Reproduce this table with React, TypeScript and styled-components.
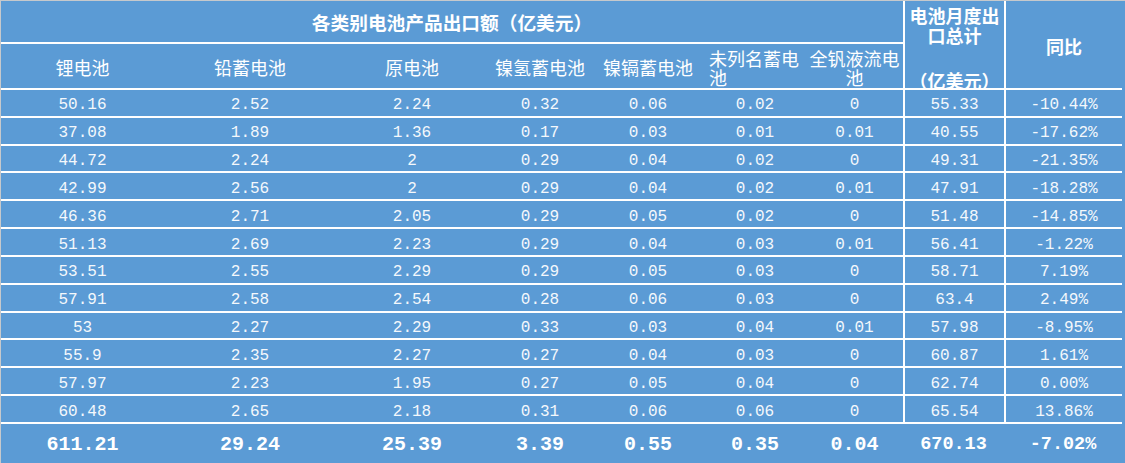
import React from "react";
import styled, { createGlobalStyle } from "styled-components";

const BLUE = "#5b9bd5";
const LINE = "#ffffff";

const headers = [
  "锂电池",
  "铅蓄电池",
  "原电池",
  "镍氢蓄电池",
  "镍镉蓄电池",
  "未列名蓄电池",
  "全钒液流电池",
];

const rows = [
  ["50.16", "2.52", "2.24", "0.32", "0.06", "0.02", "0", "55.33", "-10.44%"],
  ["37.08", "1.89", "1.36", "0.17", "0.03", "0.01", "0.01", "40.55", "-17.62%"],
  ["44.72", "2.24", "2", "0.29", "0.04", "0.02", "0", "49.31", "-21.35%"],
  ["42.99", "2.56", "2", "0.29", "0.04", "0.02", "0.01", "47.91", "-18.28%"],
  ["46.36", "2.71", "2.05", "0.29", "0.05", "0.02", "0", "51.48", "-14.85%"],
  ["51.13", "2.69", "2.23", "0.29", "0.04", "0.03", "0.01", "56.41", "-1.22%"],
  ["53.51", "2.55", "2.29", "0.29", "0.05", "0.03", "0", "58.71", "7.19%"],
  ["57.91", "2.58", "2.54", "0.28", "0.06", "0.03", "0", "63.4", "2.49%"],
  ["53", "2.27", "2.29", "0.33", "0.03", "0.04", "0.01", "57.98", "-8.95%"],
  ["55.9", "2.35", "2.27", "0.27", "0.04", "0.03", "0", "60.87", "1.61%"],
  ["57.97", "2.23", "1.95", "0.27", "0.05", "0.04", "0", "62.74", "0.00%"],
  ["60.48", "2.65", "2.18", "0.31", "0.06", "0.06", "0", "65.54", "13.86%"],
];

const totals = ["611.21", "29.24", "25.39", "3.39", "0.55", "0.35", "0.04", "670.13", "-7.02%"];

export default function App() {
  return (
    <>
      <GlobalStyle />
      <Sheet>
        <GroupTitle>各类别电池产品出口额（亿美元）</GroupTitle>
        <SideHead>
          <TotalLabel>电池月度出口总计</TotalLabel>
          <Unit>（亿美元）</Unit>
        </SideHead>
        <SideHead $center>同比</SideHead>

        {headers.map((h, i) => (
          <ColHead key={h} $left={i === 5}>
            {h}
          </ColHead>
        ))}

        {rows.map((row, r) =>
          row.map((v, c) => (
            <Cell key={r + "-" + c} $divider={c >= 7}>
              {v}
            </Cell>
          ))
        )}

        {totals.map((v, c) => (
          <TotalCell key={"t" + c} $small={c >= 7}>
            {v}
          </TotalCell>
        ))}
      </Sheet>
    </>
  );
}

const GlobalStyle = createGlobalStyle`
  body {
    margin: 0;
    background: #ffffff;
  }
`;

const Sheet = styled.div`
  box-sizing: border-box;
  width: 1125px;
  height: 463px;
  background: ${BLUE};
  border-top: 1px solid #c6c9cc;
  border-left: 1px solid #c6c9cc;
  display: grid;
  grid-template-columns: 163px 172px 152px 104px 112px 102px 97px 101px 118px;
  grid-template-rows: 43px 46px repeat(12, 27.83px) 39px;
  color: #ffffff;
  font-family: "Noto Sans CJK SC", "Noto Sans", sans-serif;
`;

const GroupTitle = styled.div`
  grid-column: 1 / 8;
  border-bottom: 2px solid ${LINE};
  display: flex;
  align-items: center;
  justify-content: center;
  font-size: 18.7px;
  font-weight: 700;
`;

const SideHead = styled.div<{ $center?: boolean }>`
  grid-row: span 2;
  border-left: 2px solid ${LINE};
  border-bottom: 2px solid ${LINE};
  display: flex;
  flex-direction: column;
  align-items: center;
  justify-content: ${(p) => (p.$center ? "center" : "flex-start")};
  padding-top: ${(p) => (p.$center ? "3px" : "4px")};
  font-size: 18px;
  font-weight: 700;
  text-align: center;
`;

const TotalLabel = styled.div`
  line-height: 20px;
  padding: 0 4px;
`;

const Unit = styled.div`
  margin-top: 25px;
  line-height: 20px;
`;

const ColHead = styled.div<{ $left?: boolean }>`
  border-bottom: 2px solid ${LINE};
  display: flex;
  align-items: center;
  justify-content: ${(p) => (p.$left ? "flex-start" : "center")};
  text-align: ${(p) => (p.$left ? "left" : "center")};
  padding: 3px 0 0 ${(p) => (p.$left ? "5px" : "0")};
  font-size: 18px;
  line-height: 19px;
`;

const Cell = styled.div<{ $divider?: boolean }>`
  border-bottom: 2px solid ${LINE};
  border-left: ${(p) => (p.$divider ? `2px solid ${LINE}` : "none")};
  display: flex;
  align-items: center;
  justify-content: center;
  padding-top: 5px;
  font-family: "Liberation Mono", "DejaVu Sans Mono", monospace;
  font-size: 16px;
  color: #f4f8fc;
`;

const TotalCell = styled.div<{ $small?: boolean }>`
  display: flex;
  align-items: center;
  justify-content: center;
  padding-top: 2px;
  font-family: "Liberation Mono", "DejaVu Sans Mono", monospace;
  font-size: ${(p) => (p.$small ? "18.5px" : "20px")};
  font-weight: 700;
`;
